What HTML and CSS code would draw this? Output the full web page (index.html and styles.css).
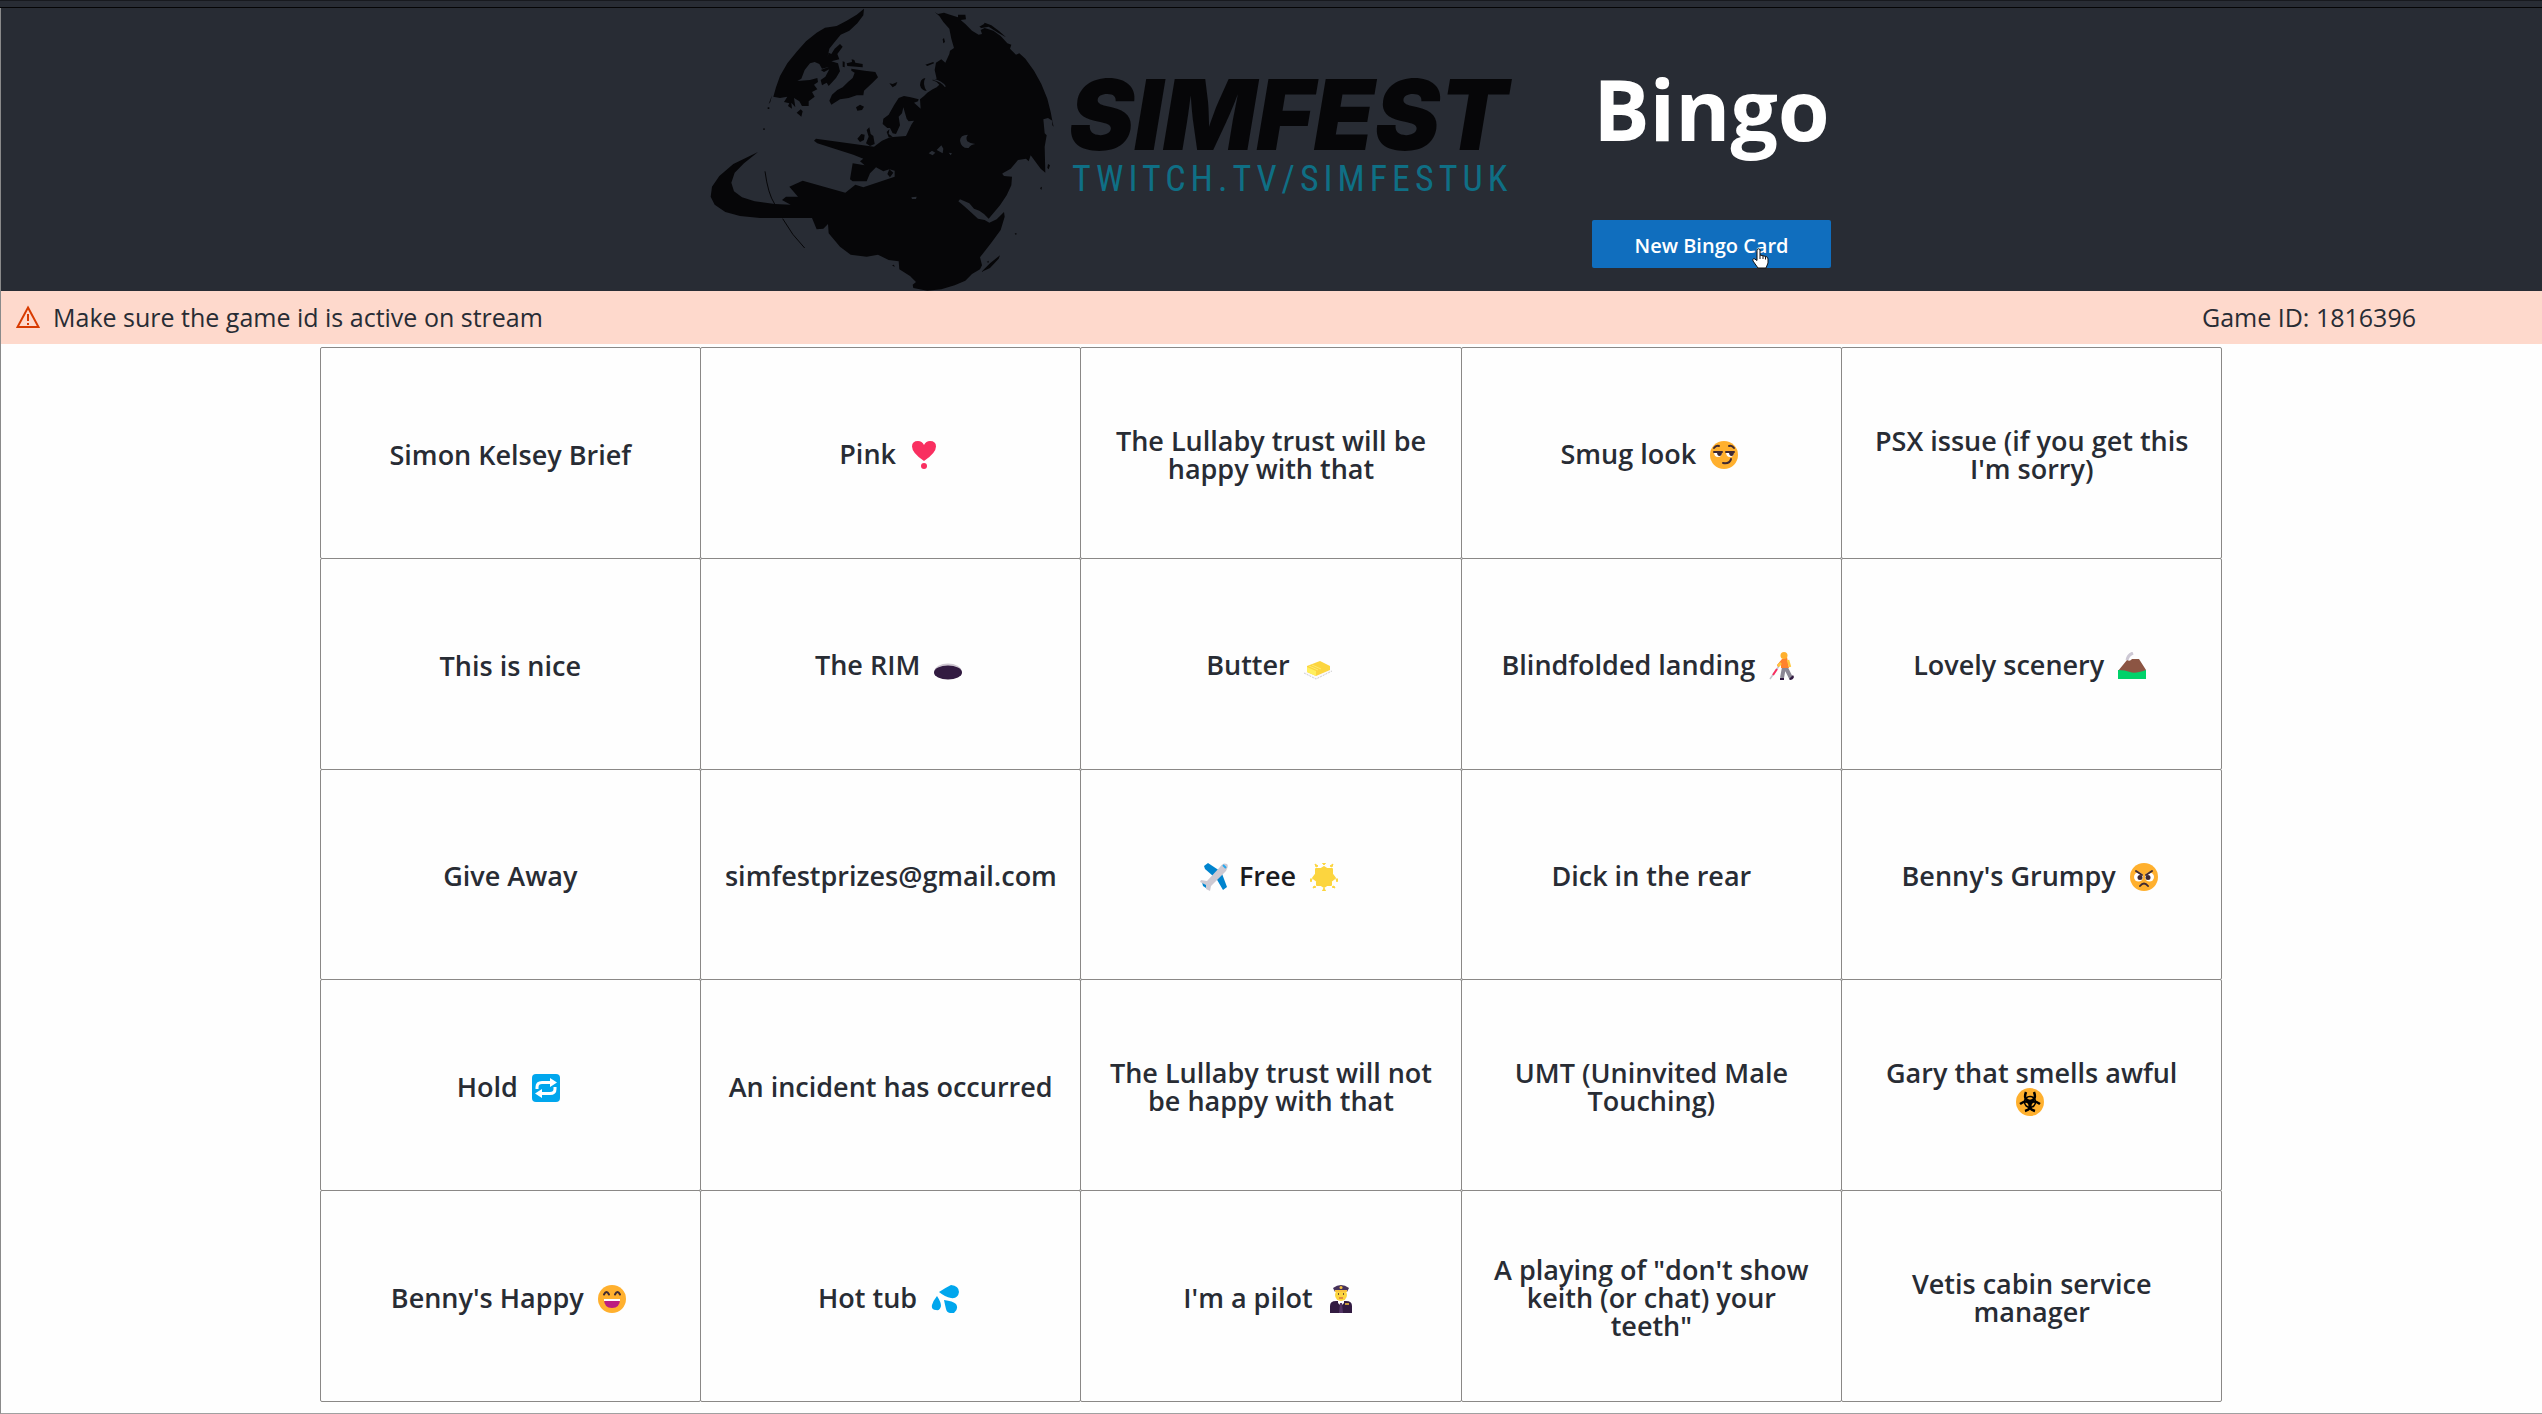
FILE: index.html
```html
<!DOCTYPE html>
<html lang="en">
<head>
<meta charset="utf-8">
<meta name="viewport" content="width=device-width, initial-scale=1">
<title>Simfest Bingo</title>
<link rel="stylesheet" href="styles.css">
</head>
<body>
<div class="strip"></div>
<div class="app">
  <header class="header">
    <div class="logo">
      <svg class="globe" viewBox="30 24 1035 849" aria-hidden="true">
        <g fill="#060608">
          <path d="M492 26L470 44L440 62L410 78L375 83L350 98L318 124L290 155L262 190L240 228L228 262L220 290L240 294L262 290L252 306L268 310L264 318L276 326L274 308L286 322L282 294L298 304L306 318L326 318L326 304L344 290L336 276L352 268L342 254L354 246L352 234L330 240L292 243L304 236L314 210L330 190L344 186L358 192L366 206L388 200L362 210L372 216L388 208L376 230L362 240L366 256L380 248L386 258L408 234L420 214L414 190L394 184L418 178L412 162L428 140L420 132L404 146L394 162L386 158L382 174L388 146L404 126L422 104L448 92L472 70L490 46Z"/>
          <path d="M290 338L302 328L308 334L304 350ZM428 184L434 186L434 202L428 200ZM440 190L456 186L455 178L463 180L466 188L488 192L488 202L442 198Z"/>
          <path d="M454 206L494 212L526 216L534 232L516 250L492 272L490 286L470 286L446 294L420 298L394 314L388 302L396 284L412 270L428 262L444 246L458 234L464 218L454 212ZM568 250L578 252L592 246L588 256L578 262ZM468 322L480 314L492 320L486 330L472 332ZM728 118L732 114L735 126L730 130ZM676 194L700 186L702 190L682 198ZM190 385h4v5h-4ZM203 322h5v5h-5ZM216 286L206 312L211 306Z"/>
          <path d="M676 234Q660 236 660 256Q664 272 680 273Q666 252 676 234Z"/>
          <path d="M704 36L714 42L732 38L750 44L774 52L774 44L796 44L798 58L782 60L796 72L816 92L836 104L846 102L842 90L854 84L880 92L902 108L922 130L934 134L930 146L948 164L958 160L976 176L1002 212L1024 252L1042 296L1052 336L1057 362L1044 354L1030 358L1034 400L1040 406L1034 440L1036 518L1022 506L992 466L986 484L978 476L954 480L932 506L908 520L904 528L890 552L876 550L866 536L850 530L848 522L864 520L884 526L904 518L912 528L936 530L934 556L920 586L900 616L866 656L852 642L838 632L822 626L808 610L780 598L775 604L792 618L812 636L834 656L854 660L868 668L890 658L912 636L914 650L902 690L874 728L840 772L846 796L840 808L816 822L796 842L764 856L724 868L682 872L640 864L638 854L648 846L630 828L598 808L596 784L566 780L534 764L500 770L452 764L420 740L386 700L384 672L370 686L350 688L336 654L180 654L120 648L76 636L44 614L32 590L36 560L58 528L100 492L174 456L132 490L104 518L94 548L102 574L126 592L164 604L224 612L272 614L246 600L258 590L294 590L268 560L308 542L436 578L466 554L490 562L584 530L584 512L568 508L580 518L570 532L562 522L568 508L550 514L528 502L510 520L500 544L458 544L450 538L458 490L494 496L480 484L490 476L460 464L352 430L342 422L348 416L522 440L546 422L570 412L618 408L634 374L642 362L626 364L620 356L610 322L606 340L596 350L600 376L588 402L578 400L570 384L562 384L548 372L550 356L566 344L582 316L596 294L612 288L632 292L656 298L654 304L642 308L662 326L660 298L672 288L682 278L698 268L710 262L718 254L710 246L696 240L710 236L704 210L708 188L724 178L736 188L748 162L750 152L762 144L754 116L748 86L730 66L718 48Z"/>
          <path d="M472 416L484 402L494 404L492 420L480 426ZM500 390L508 382L512 402L520 408L524 432L510 438L498 430L506 410ZM560 396L568 388L566 402L578 410L566 412ZM838 80L852 72L854 68L874 76L898 94L918 112L894 98L866 80L844 84ZM1044 492L1050 496L1046 508L1042 504ZM1020 564L1026 560L1024 570ZM844 816L870 790L900 766L896 776L870 804ZM860 786L866 782L866 788ZM576 796L582 794L584 801ZM944 700L950 700L948 706ZM1056 360L1061 380L1057 376Z"/>
          <path d="M195 514Q204 582 224 612M248 656Q276 706 314 744" fill="none" stroke="#060608" stroke-width="3"/>
        </g>
        <g fill="#282c34">
          <path d="M804 404Q780 404 780 422Q784 446 806 444Q812 434 826 432Q812 432 802 424Q796 412 804 404ZM686 460L696 452L706 458L698 466ZM710 450L724 436L730 446L728 460ZM746 458L756 460L752 466ZM634 592L650 590L648 597L636 597ZM522 524h6v6h-6Z"/>
        </g>
        <path d="M700 238Q726 244 736 260" fill="none" stroke="#282c34" stroke-width="4"/>
      </svg>
      <div class="wordmark">
        <div class="brand">SIMFEST</div>
        <div class="channel">TWITCH.TV/SIMFESTUK</div>
      </div>
    </div>
    <div class="actions">
      <h1 class="title">Bingo</h1>
      <button class="primary" type="button">New Bingo Card
        <svg class="pointer" viewBox="0 0 17 21" aria-hidden="true"><path d="M5 1.5Q6.500 0 8 1.500V7L14 8.500Q16 9 16 11V15L14 20H6L1 13Q0 11 2 10.500L5 12.500Z" fill="#fff" stroke="#111" stroke-width="1"/><path d="M8 7v4M11 8v3M13.500 9v2.500" stroke="#111" stroke-width="1"/></svg>
      </button>
    </div>
  </header>
  <div class="notice" role="status">
    <svg class="warn" viewBox="0 0 24 24" aria-hidden="true"><path d="M12 2.500L22.500 22H1.500ZM12 9v7M12 18v2" fill="none" stroke="#d83b01" stroke-width="2"/></svg>
    <span>Make sure the game id is active on stream</span>
    <span class="game">Game ID: 1816396</span>
  </div>
  <main class="board">
    <button class="cell" type="button"><span>Simon Kelsey Brief</span></button>
    <button class="cell" type="button"><span>Pink&nbsp; <svg class="emoji" viewBox="0 0 28 28" aria-hidden="true"><path d="M14 20Q2 12 2 5.500Q2 0 8 0Q12 0 14 4Q16 0 20 0Q26 0 26 5.500Q26 12 14 20Z" fill="#f92f60"/><circle cx="14" cy="25" r="3" fill="#f92f60"/></svg></span></button>
    <button class="cell" type="button"><span>The Lullaby trust will be happy with that</span></button>
    <button class="cell" type="button"><span>Smug look&nbsp; <svg class="emoji" viewBox="0 0 28 28" aria-hidden="true"><circle cx="14" cy="14" r="14" fill="#ffb02e"/><path d="M4 11h8q0 5-4 5t-4-5M16 11h8q0 5-4 5t-4-5" fill="#fff"/><path d="M7 11h5q0 4-2.500 4T7 11M19 11h5q0 4-2.500 4T19 11" fill="#402a32"/><path d="M4 11h8M16 11h8M4 7q2-3 5-2M19 5q3-1 5 2M13 22q7 1 8-4" fill="none" stroke="#402a32" stroke-width="2" stroke-linecap="round"/></svg></span></button>
    <button class="cell" type="button"><span>PSX issue (if you get this I'm sorry)</span></button>

    <button class="cell" type="button"><span>This is nice</span></button>
    <button class="cell" type="button"><span>The RIM&nbsp; <svg class="emoji" viewBox="0 0 28 28" aria-hidden="true"><ellipse cx="14" cy="19" rx="13.500" ry="7.500" fill="#cfc8d2"/><ellipse cx="14" cy="20.500" rx="14" ry="7" fill="#321b41"/></svg></span></button>
    <button class="cell" type="button"><span>Butter&nbsp; <svg class="emoji" viewBox="0 0 28 28" aria-hidden="true"><path d="M0 21L12 27L28 19L16 14Z" fill="#fbf9fd"/><path d="M0 21L12 27L28 19" fill="none" stroke="#ccc" stroke-dasharray="2 1"/><path d="M3 14L16 9L26 14V18L12 24L3 20Z" fill="#fcd53f"/><path d="M3 15L12 19V24L3 20Z" fill="#ffef5e"/><path d="M5 14L14 18M8 13L17 17" stroke="#ffea70" stroke-width="1"/></svg></span></button>
    <button class="cell" type="button"><span>Blindfolded landing&nbsp; <svg class="emoji" viewBox="0 0 28 28" aria-hidden="true"><path d="M10 14L1 27" stroke="#c5c5ce" stroke-width="1.500"/><path d="M8 17L4 23" stroke="#f92f60" stroke-width="2"/><path d="M15 15L13 26M17 16L22 26" stroke="#8b8794" stroke-width="4"/><path d="M11 26h4v2h-4ZM20 27L24 23L25 25Q24 28 21 28Z" fill="#321b41"/><path d="M13 7L18 5L20 16H12V13L9 15L8 13Z" fill="#ff822d"/><path d="M19 8L21 15M12 11L9 14" stroke="#ffc83d" stroke-width="2.500"/><circle cx="15" cy="3.500" r="3.500" fill="#ffb02e"/></svg></span></button>
    <button class="cell" type="button"><span>Lovely scenery&nbsp; <svg class="emoji" viewBox="0 0 28 28" aria-hidden="true"><path d="M9 8Q10 3 15 1" fill="none" stroke="#cdc8d4" stroke-width="3"/><path d="M0 19L9 8Q12 10 14 7H21L28 18V22H0Z" fill="#8c5543"/><path d="M0 18Q7 18 12 20T28 18V27H0Z" fill="#00d26a"/></svg></span></button>

    <button class="cell" type="button"><span>Give Away</span></button>
    <button class="cell" type="button"><span>simfestprizes@gmail.com</span></button>
    <button class="cell free" type="button"><span><svg class="emoji" viewBox="0 0 28 28" aria-hidden="true"><path d="M4 3L8 0L20 8L13 13L5 6ZM21 8L27 24L23 27L16 15ZM2 19L8 20L6 25L3 23Z" fill="#0084ce"/><path d="M20 4Q23 -1 27 1Q29 3 26 8L11 23L10 28L6 26V22L0 19L1 17L7 18Z" fill="#cdc9d2"/><path d="M23 2l3 3" stroke="#26a8ee" stroke-width="2"/></svg> Free&nbsp; <svg class="emoji" viewBox="0 0 28 28" aria-hidden="true"><path d="M14 4L17 6L22 6L22 11L25 15L21 18L21 22L17 22L14 24L11 22L7 22L7 18L3 15L6 11L6 6L11 6Z" fill="#fcd53f" stroke="#fcd53f" stroke-width="2" stroke-linejoin="round"/><path d="M12.500 0h3l-1.500 2ZM5 1l3 2-2 1ZM23 1l-3 2 2 1ZM0 16l2 0-1 3ZM28 16l-2 0 1 3ZM14 25l1.500 3h-3ZM4 23l2 1-3 1ZM24 23l-2 1 3 1Z" fill="#fcd53f" stroke="#fcd53f" stroke-linejoin="round"/></svg></span></button>
    <button class="cell" type="button"><span>Dick in the rear</span></button>
    <button class="cell" type="button"><span>Benny's Grumpy&nbsp; <svg class="emoji" viewBox="0 0 28 28" aria-hidden="true"><circle cx="14" cy="14" r="14" fill="#ffb02e"/><circle cx="8.500" cy="14" r="4.500" fill="#fff"/><circle cx="19.500" cy="14" r="4.500" fill="#fff"/><circle cx="10" cy="14.500" r="2.500" fill="#402a32"/><circle cx="18" cy="14.500" r="2.500" fill="#402a32"/><path d="M6 8L12 12M22 8L16 12M10 23q4-5 8 0" fill="none" stroke="#402a32" stroke-width="2" stroke-linecap="round"/></svg></span></button>

    <button class="cell" type="button"><span>Hold&nbsp; <svg class="emoji" viewBox="0 0 28 28" aria-hidden="true"><rect width="28" height="28" rx="4" fill="#00a6ed"/><path d="M5 15V13Q5 8.500 10 8.500H20M23 13V15Q23 19.500 18 19.500H8" fill="none" stroke="#fff" stroke-width="3"/><path d="M18 4L25 8.500L18 13ZM10 15V24L3 19.500Z" fill="#fff"/></svg></span></button>
    <button class="cell" type="button"><span>An incident has occurred</span></button>
    <button class="cell" type="button"><span>The Lullaby trust will not be happy with that</span></button>
    <button class="cell" type="button"><span>UMT (Uninvited Male Touching)</span></button>
    <button class="cell" type="button"><span>Gary that smells awful<br><svg class="emoji" viewBox="0 0 28 28" aria-hidden="true"><circle cx="14" cy="14" r="14" fill="#ffb02e"/><g fill="none" stroke="#000"><path d="M10 4Q7 12 14 13Q21 12 18 4M4 16Q11 11 14 16Q16 21 9 23M24 16Q17 11 14 16Q12 21 19 23" stroke-width="2.500"/><circle cx="14" cy="14" r="5.500" stroke-width="1.500"/></g><circle cx="14" cy="14.500" r="2.500"/></svg></span></button>

    <button class="cell" type="button"><span>Benny's Happy&nbsp; <svg class="emoji" viewBox="0 0 28 28" aria-hidden="true"><circle cx="14" cy="14" r="14" fill="#ffb02e"/><path d="M6 9.500q2.500-5 5 0M17 9.500q2.500-5 5 0" fill="none" stroke="#402a32" stroke-width="2" stroke-linecap="round"/><path d="M6 14H22Q22 23 14 23T6 14Z" fill="#bb1d80"/><path d="M6 14H22V16H6Z" fill="#fff"/></svg></span></button>
    <button class="cell" type="button"><span>Hot tub&nbsp; <svg class="emoji" viewBox="0 0 28 28" aria-hidden="true"><path d="M8 7Q14 3 20 0Q28 1 28 7Q27 14 20 13Q14 12 8 7ZM6 11Q10 17 10 21Q9 26 5 25Q0 25 1 20Q2 16 6 11ZM13 15Q22 16 25 19Q28 24 23 28Q16 29 15 24Q14 20 13 15Z" fill="#00a6ed"/></svg></span></button>
    <button class="cell" type="button"><span>I'm a pilot&nbsp; <svg class="emoji" viewBox="0 0 28 28" aria-hidden="true"><path d="M3 28V21Q3 16 9 16H19Q25 16 25 21V28Z" fill="#321b41"/><path d="M11 14h6v4l-3 3-3-3Z" fill="#fff"/><path d="M13 18h2l1 10h-4Z" fill="#533566"/><circle cx="14" cy="10" r="6" fill="#fcd53f"/><path d="M6 3Q14 -3 22 3L20 7H8Z" fill="#46325a"/><path d="M8 5H20V7H8Z" fill="#f9c23c"/><circle cx="14" cy="2.500" r="1.500" fill="#f9c23c"/><path d="M12 13h4" stroke="#c9443f"/><path d="M11 9h1M16 9h1" stroke="#402a32" stroke-width="1.500"/><path d="M18 19h4" stroke="#f9c23c" stroke-width="1.500"/></svg></span></button>
    <button class="cell" type="button"><span>A playing of "don't show keith (or chat) your teeth"</span></button>
    <button class="cell" type="button"><span>Vetis cabin service manager</span></button>
  </main>
</div>
</body>
</html>
```

FILE: styles.css
```css
* {
  box-sizing: border-box;
}

body {
  margin: 0;
  min-height: 100vh;
  display: flex;
  flex-direction: column;
  background: #fefefe;
  color: #282c34;
  font-family: "Segoe UI", "Open Sans", "Noto Sans", sans-serif;
}

button {
  font-family: inherit;
}

.strip {
  height: 8px;
  background: #282c34;
  border-top: 1px solid #17191e;
  border-bottom: 1px solid #050506;
}

.app {
  flex: 1;
  display: flex;
  flex-direction: column;
  border-left: 1px solid #8a8a8a;
  border-bottom: 1px solid #a0a0a0;
}

.header {
  display: flex;
  justify-content: center;
  gap: 75px;
  padding-right: 2px;
  background: #282c34;
}

.logo {
  display: flex;
  gap: 14px;
}

.globe {
  display: block;
  width: 345px;
  height: 283px;
}

.wordmark {
  width: 448px;
  padding-top: 60px;
}

.brand {
  color: #060608;
  font: italic 900 98px/94px Inter, sans-serif;
}

.channel {
  padding-left: 3px;
  color: #0f6f85;
  font: 400 36px/34px "Roboto Condensed", Roboto, sans-serif;
  letter-spacing: 5px;
  white-space: nowrap;
}

.actions {
  width: 239px;
}

.title {
  margin: 0;
  padding-top: 45px;
  color: #fff;
  text-align: center;
  font-size: 84px;
  line-height: 112px;
  font-weight: 700;
}

.primary {
  position: relative;
  display: block;
  width: 100%;
  height: 48px;
  margin-top: 55px;
  padding: 2px 0 0;
  border: 0;
  border-radius: 2px;
  background: #106ebe;
  color: #fff;
  font-size: 20px;
  font-weight: 600;
}

.pointer {
  position: absolute;
  left: 160px;
  top: 28px;
  width: 17px;
  height: 21px;
}

.notice {
  display: flex;
  align-items: center;
  height: 53px;
  padding: 0 126px 2px 15px;
  background: #fed9cc;
  font-size: 25px;
}

.warn {
  width: 24px;
  height: 24px;
  margin-right: 13px;
}

.game {
  margin-left: auto;
}

.board {
  flex: 1;
  display: grid;
  grid-template-columns: repeat(5, minmax(0, 1fr));
  grid-auto-rows: 1fr;
  width: 75%;
  margin: 3px auto 12px;
  padding: 0 3px 0 1px;
}

.cell {
  margin: 0 -1px -1px 0;
  padding: 4px 24px 0;
  border: 1px solid #8a8886;
  border-radius: 2px;
  background: #fefefe;
  color: inherit;
  font-size: 27px;
  line-height: 28px;
  font-weight: 600;
}

.free {
  color: #1b1b1f;
}

.emoji {
  width: 28px;
  height: 28px;
  margin-right: 4px;
  vertical-align: -5px;
}
```
